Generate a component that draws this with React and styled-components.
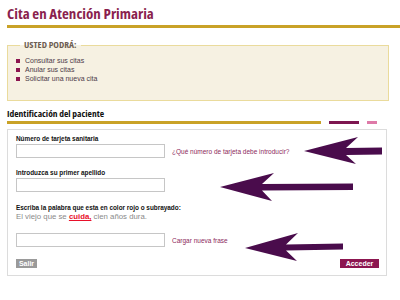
import React from 'react';
import styled, { createGlobalStyle } from 'styled-components';

const Global = createGlobalStyle`
    html, body {
        margin: 0;
        padding: 0;
        background: #fff;
    }
    body {
        font-family: "Liberation Sans", Arial, sans-serif;
    }
`;

const arrows = [
    'M304 151 L358 137 L346 148 L382 147.5 L382 154.5 L346 155 L356 164 Z',
    'M220 187 L274 173 L262 184 L353 183.5 L353 190 L262 190.5 L272 201 Z',
    'M245 248 L298 233 L286 244.5 L343 243.5 L343 249.5 L286 250.5 L297 261 Z',
];

export default () => {
    return (
        <Page>
            <Global />
            <Title>Cita en Atención Primaria</Title>

            <InfoBox>
                <Legend>USTED PODRÁ:</Legend>
                <List>
                    <Item>Consultar sus citas</Item>
                    <Item>Anular sus citas</Item>
                    <Item>Solicitar una nueva cita</Item>
                </List>
            </InfoBox>

            <Heading>Identificación del paciente</Heading>
            <BarRow>
                <Bar color="#c9a227" width={314} />
                <Bar color="#7d1650" width={30} />
                <Bar color="#de7aa8" width={10} />
            </BarRow>

            <FormBox>
                <Label>Número de tarjeta sanitaria</Label>
                <Row>
                    <Input />
                    <Link>¿Qué número de tarjeta debe introducir?</Link>
                </Row>

                <Label gap={10}>Introduzca su primer apellido</Label>
                <Row>
                    <Input />
                </Row>

                <Label gap={11}>Escriba la palabra que esta en color rojo o subrayado:</Label>
                <Hint>
                    El viejo que se <Red>cuida,</Red> cien años dura.
                </Hint>
                <Row gap={12}>
                    <Input />
                    <Link>Cargar nueva frase</Link>
                </Row>

                <Buttons>
                    <Button bg="#9a9a9a" width={21}>Salir</Button>
                    <Button bg="#8c1650" width={39}>Acceder</Button>
                </Buttons>
            </FormBox>

            <Overlay width="400" height="300" viewBox="0 0 400 300">
                {arrows.map((d, i) => (
                    <path key={i} d={d} fill="#4a0c4c" />
                ))}
            </Overlay>
        </Page>
    );
};

const Page = styled.div`
    position: relative;
    width: 400px;
    height: 300px;
    box-sizing: border-box;
    padding-left: 7px;
    overflow: hidden;
`;

const Title = styled.h1`
    margin: 0;
    padding: 4px 0 3px;
    font-family: "Open Sans", sans-serif;
    font-stretch: 75%;
    font-weight: 700;
    font-size: 15px;
    line-height: 18px;
    color: #8a1f4e;
    border-bottom: 3px solid #c9a227;
`;

const InfoBox = styled.fieldset`
    margin: 12px 11px 0 0;
    padding: 0 0 17px 8px;
    min-width: 0;
    background: #f6f1e2;
    border: 1px solid #eadb9c;
`;

const Legend = styled.legend`
    margin-left: 4px;
    padding: 0 4px;
    font-family: "Open Sans", sans-serif;
    font-stretch: 75%;
    font-weight: 700;
    font-size: 9.5px;
    line-height: 10px;
    color: #6e5e52;
`;

const List = styled.ul`
    margin: 6px 0 0;
    padding: 0;
    list-style: none;
`;

const Item = styled.li`
    display: flex;
    align-items: center;
    gap: 5px;
    font-size: 7px;
    line-height: 9px;
    color: #4b3a48;

    &::before {
        content: '';
        width: 4px;
        height: 4px;
        background: #8c1650;
    }
`;

const Heading = styled.h2`
    margin: 7px 0 0;
    font-family: "Open Sans", sans-serif;
    font-stretch: 75%;
    font-weight: 700;
    font-size: 9.5px;
    line-height: 12px;
    color: #111;
`;

const BarRow = styled.div`
    display: flex;
    gap: 8px;
    margin-top: 1px;
`;

const Bar = styled.div`
    width: ${(p) => p.width}px;
    height: 3px;
    background: ${(p) => p.color};
`;

const FormBox = styled.div`
    width: 380px;
    box-sizing: border-box;
    margin-top: 5px;
    padding: 4px 7px 7px 8px;
    border: 1px solid #dcdcdc;
`;

const Label = styled.div`
    margin-top: ${(p) => p.gap || 0}px;
    font-weight: 700;
    font-size: 6.4px;
    line-height: 9px;
    color: #111;
`;

const Row = styled.div`
    display: flex;
    align-items: center;
    gap: 7px;
    margin-top: ${(p) => p.gap || 1}px;
`;

const Input = styled.div`
    width: 149px;
    height: 14px;
    box-sizing: border-box;
    border: 1px solid #c6c6c6;
    background: #fff;
`;

const Link = styled.span`
    font-size: 6.5px;
    color: #8c2a5c;
`;

const Hint = styled.div`
    font-size: 7.8px;
    line-height: 9px;
    color: #8a8a8a;
`;

const Red = styled.span`
    color: #e8102a;
    font-weight: 700;
    text-decoration: underline;
`;

const Buttons = styled.div`
    display: flex;
    justify-content: space-between;
    margin-top: 12px;
`;

const Button = styled.div`
    width: ${(p) => p.width}px;
    height: 9px;
    background: ${(p) => p.bg};
    color: #fff;
    font-weight: 700;
    font-size: 7px;
    line-height: 9px;
    text-align: center;
`;

const Overlay = styled.svg`
    position: absolute;
    top: 0;
    left: 0;
    pointer-events: none;
`;
